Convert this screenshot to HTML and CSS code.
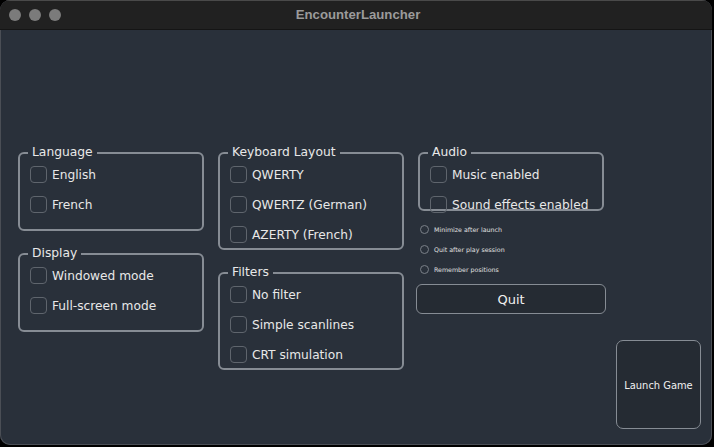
FILE: index.html
```html
<!DOCTYPE html>
<html>
<head>
<meta charset="utf-8">
<link rel="stylesheet" href="styles.css">
</head>
<body>
<div class="window">
  <div class="titlebar">
    <div class="lights"><span></span><span></span><span></span></div>
    <div class="title">EncounterLauncher</div>
  </div>
  <div class="content">
    <div class="col">
      <div class="group g2">
        <div class="group-title">Language</div>
        <div class="row"><span class="cb"></span><span class="lbl">English</span></div>
        <div class="row"><span class="cb"></span><span class="lbl">French</span></div>
      </div>
      <div class="group g2">
        <div class="group-title">Display</div>
        <div class="row"><span class="cb"></span><span class="lbl">Windowed mode</span></div>
        <div class="row"><span class="cb"></span><span class="lbl">Full-screen mode</span></div>
      </div>
    </div>
    <div class="col">
      <div class="group g3">
        <div class="group-title">Keyboard Layout</div>
        <div class="row"><span class="cb"></span><span class="lbl">QWERTY</span></div>
        <div class="row"><span class="cb"></span><span class="lbl">QWERTZ (German)</span></div>
        <div class="row"><span class="cb"></span><span class="lbl">AZERTY (French)</span></div>
      </div>
      <div class="group g3">
        <div class="group-title">Filters</div>
        <div class="row"><span class="cb"></span><span class="lbl">No filter</span></div>
        <div class="row"><span class="cb"></span><span class="lbl">Simple scanlines</span></div>
        <div class="row"><span class="cb"></span><span class="lbl">CRT simulation</span></div>
      </div>
    </div>
    <div class="col col3">
      <div class="group ga">
        <div class="group-title">Audio</div>
        <div class="row"><span class="cb"></span><span class="lbl">Music enabled</span></div>
        <div class="row"><span class="cb"></span><span class="lbl">Sound effects enabled</span></div>
      </div>
      <div class="radios">
        <div class="radio"><span class="rb"></span>Minimize after launch</div>
        <div class="radio"><span class="rb"></span>Quit after play session</div>
        <div class="radio"><span class="rb"></span>Remember positions</div>
      </div>
      <button class="quit">Quit</button>
    </div>
    <button class="launch">Launch Game</button>
  </div>
</div>
</body>
</html>
```
FILE: styles.css
```css
html, body {
  margin: 0;
  padding: 0;
  background: #000;
  width: 714px;
  height: 447px;
  overflow: hidden;
}
.window {
  width: 712px;
  height: 445px;
  border-radius: 10px;
  background: #29303a;
  box-shadow: inset 0 0 0 1px #4a4e55;
  overflow: hidden;
  display: flex;
  flex-direction: column;
  font-family: "DejaVu Sans", sans-serif;
  color: #e8e8e8;
}
.titlebar {
  flex: none;
  background: #212121;
  border-top: 1px solid #4a4a4a;
  border-bottom: 1px solid #151515;
  box-sizing: border-box;
  height: 30px;
  display: flex;
  align-items: center;
  position: relative;
}
.lights {
  display: flex;
  gap: 8px;
  padding-left: 9px;
}
.lights span {
  width: 12px;
  height: 12px;
  border-radius: 50%;
  background: #7b7b7b;
}
.title {
  position: absolute;
  left: 0;
  right: 0;
  top: 6px;
  text-align: center;
  font-weight: bold;
  color: #9b9b9b;
  font-family: "Liberation Sans", sans-serif;
  font-size: 13.2px;
  padding-left: 4px;
}
.content {
  flex: 1;
  display: flex;
  padding: 122px 11px 16px 18px;
}
.col {
  width: 186px;
  margin-right: 14px;
  display: flex;
  flex-direction: column;
  gap: 22px;
}
.group {
  position: relative;
  border: 2px solid #868c94;
  border-radius: 6px;
  box-sizing: border-box;
  padding: 5px 0 0 10px;
}
.g2 { height: 79px; }
.g3 { height: 98px; }
.ga { height: 59px; }
.group-title {
  position: absolute;
  top: -10px;
  left: 8px;
  padding: 0 4px;
  background: #29303a;
  font-size: 12.3px;
  line-height: 16px;
}
.row {
  height: 30px;
  display: flex;
  align-items: center;
  font-size: 12.2px;
  white-space: nowrap;
}
.lbl {
  padding-top: 2px;
}
.cb {
  width: 15px;
  height: 15px;
  border: 1px solid #5f656d;
  border-radius: 4px;
  margin-right: 5px;
  flex: none;
}
.col3 { gap: 0; }
.radios {
  margin-top: 8px;
  margin-left: 2px;
}
.radio {
  height: 20px;
  display: flex;
  align-items: center;
  font-size: 6.3px;
  color: #e0e0e0;
}
.rb {
  width: 7px;
  height: 7px;
  border: 1px solid #7a8088;
  border-radius: 50%;
  margin-right: 5px;
}
.quit {
  margin-top: 5px;
  margin-left: -2px;
  width: 190px;
  height: 30px;
  border: 1px solid #868c94;
  border-radius: 6px;
  background: #252b33;
  color: #f0f0f0;
  font-family: "DejaVu Sans", sans-serif;
  font-size: 13px;
  padding: 0;
}
.launch {
  align-self: flex-end;
  margin-left: -2px;
  width: 85px;
  height: 89px;
  border: 1px solid #868c94;
  border-radius: 7px;
  background: #252b33;
  color: #f0f0f0;
  font-family: "DejaVu Sans Condensed", "Liberation Sans Narrow", sans-serif;
  font-size: 11px;
  padding: 2px 0 0;
}
```
